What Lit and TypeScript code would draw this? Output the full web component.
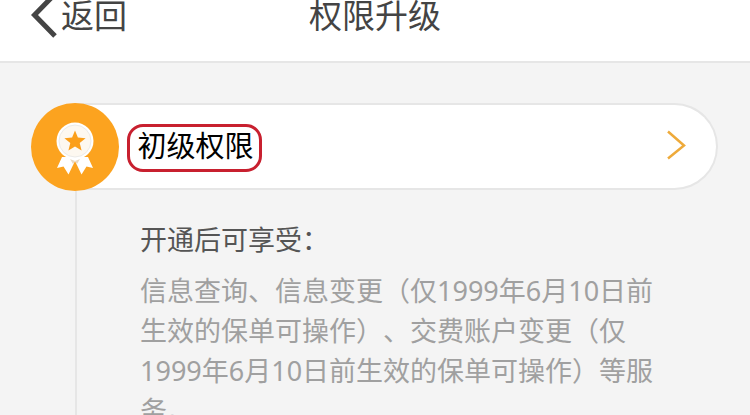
import { LitElement, html, css } from "lit";
import { customElement } from "lit/decorators.js";

@customElement("app-root")
export class AppRoot extends LitElement {
  static styles = css`
    :host {
      display: block;
      width: 750px;
      height: 415px;
      overflow: hidden;
      background: #f4f4f4;
      font-family: "Noto Sans", "Noto Sans CJK SC", sans-serif;
      text-spacing-trim: space-all;
    }
    .header {
      height: 61px;
      background: #fff;
      border-bottom: 2px solid #e6e6e6;
      display: grid;
      grid-template-columns: 1fr auto 1fr;
      align-items: start;
      color: #444;
      font-size: 33px;
      line-height: 32px;
      overflow: hidden;
    }
    .back {
      display: flex;
      align-items: flex-start;
      gap: 4px;
      padding-left: 31px;
    }
    .back svg {
      display: block;
      flex: none;
      margin-top: -8px;
    }
    .main {
      padding: 40px 32px 0 31px;
    }
    .row {
      display: flex;
      align-items: center;
      height: 88px;
    }
    .medal {
      flex: none;
      width: 88px;
      height: 88px;
      border-radius: 50%;
      background: #fca31f;
      display: flex;
      align-items: center;
      justify-content: center;
      position: relative;
      z-index: 1;
    }
    .pill {
      flex: 1;
      box-sizing: border-box;
      height: 87px;
      margin: 0 0 1px -44px;
      padding: 0 30px 4px 52px;
      background: #fff;
      border: 2px solid #e6e6e6;
      border-left: none;
      border-radius: 0 44px 44px 0;
      display: flex;
      align-items: center;
      justify-content: space-between;
    }
    .badge {
      width: 135px;
      height: 48px;
      box-sizing: border-box;
      margin-top: 6px;
      padding: 0 0 4px 2px;
      border: 3px solid #c8202f;
      border-radius: 16px;
      display: flex;
      align-items: center;
      justify-content: center;
      font-size: 29px;
      color: #000;
      line-height: 1;
    }
    .body {
      margin-left: 44px;
      border-left: 2px solid #e6e6e6;
      padding: 29px 0 0 63px;
    }
    .sub {
      margin: 0;
      font-size: 27px;
      line-height: 40px;
      color: #555;
    }
    .desc {
      margin: 11px 0 0;
      width: 516px;
      font-size: 27px;
      line-height: 40px;
      color: #a0a0a0;
    }
  `;

  render() {
    return html`
      <div class="header">
        <div class="back">
          <svg width="26" height="48" viewBox="0 0 26 48" fill="none">
            <path d="M24 2 L3.5 23 L24 44" stroke="#444" stroke-width="5" />
          </svg>
          <span>返回</span>
        </div>
        <div>权限升级</div>
        <div></div>
      </div>
      <div class="main">
        <div class="row">
          <div class="medal">
            <svg width="40" height="56" viewBox="0 0 40 56">
              <path d="M7 38 L2 49 L8.5 47.5 L13.5 55.5 L20 42 L26.5 55.5 L31.5 47.5 L38 49 L33 38 Z" fill="#fff" />
              <path d="M20 42 L15 40 L18 45 Z M20 42 L25 40 L22 45 Z" fill="#ead9c2" />
              <circle cx="20" cy="22" r="18.5" fill="#fff" />
              <circle cx="20" cy="22" r="16" fill="#fdf8f0" stroke="#ecebe8" stroke-width="1" />
              <path d="M20 11.5 L22.9 18.6 L30.6 19.2 L24.7 24.1 L26.6 31.5 L20 27.5 L13.4 31.5 L15.3 24.1 L9.4 19.2 L17.1 18.6 Z" fill="#fb9f1a" />
            </svg>
          </div>
          <div class="pill">
            <div class="badge">初级权限</div>
            <svg width="20" height="30" viewBox="0 0 20 30" fill="none">
              <path d="M2 1.5 L18 15.5 L2 28.5" stroke="#eeaa3a" stroke-width="2.5" />
            </svg>
          </div>
        </div>
        <div class="body">
          <p class="sub">开通后可享受：</p>
          <p class="desc">信息查询、信息变更（仅1999年6月10日前生效的保单可操作）、交费账户变更（仅1999年6月10日前生效的保单可操作）等服务。</p>
        </div>
      </div>
    `;
  }
}
